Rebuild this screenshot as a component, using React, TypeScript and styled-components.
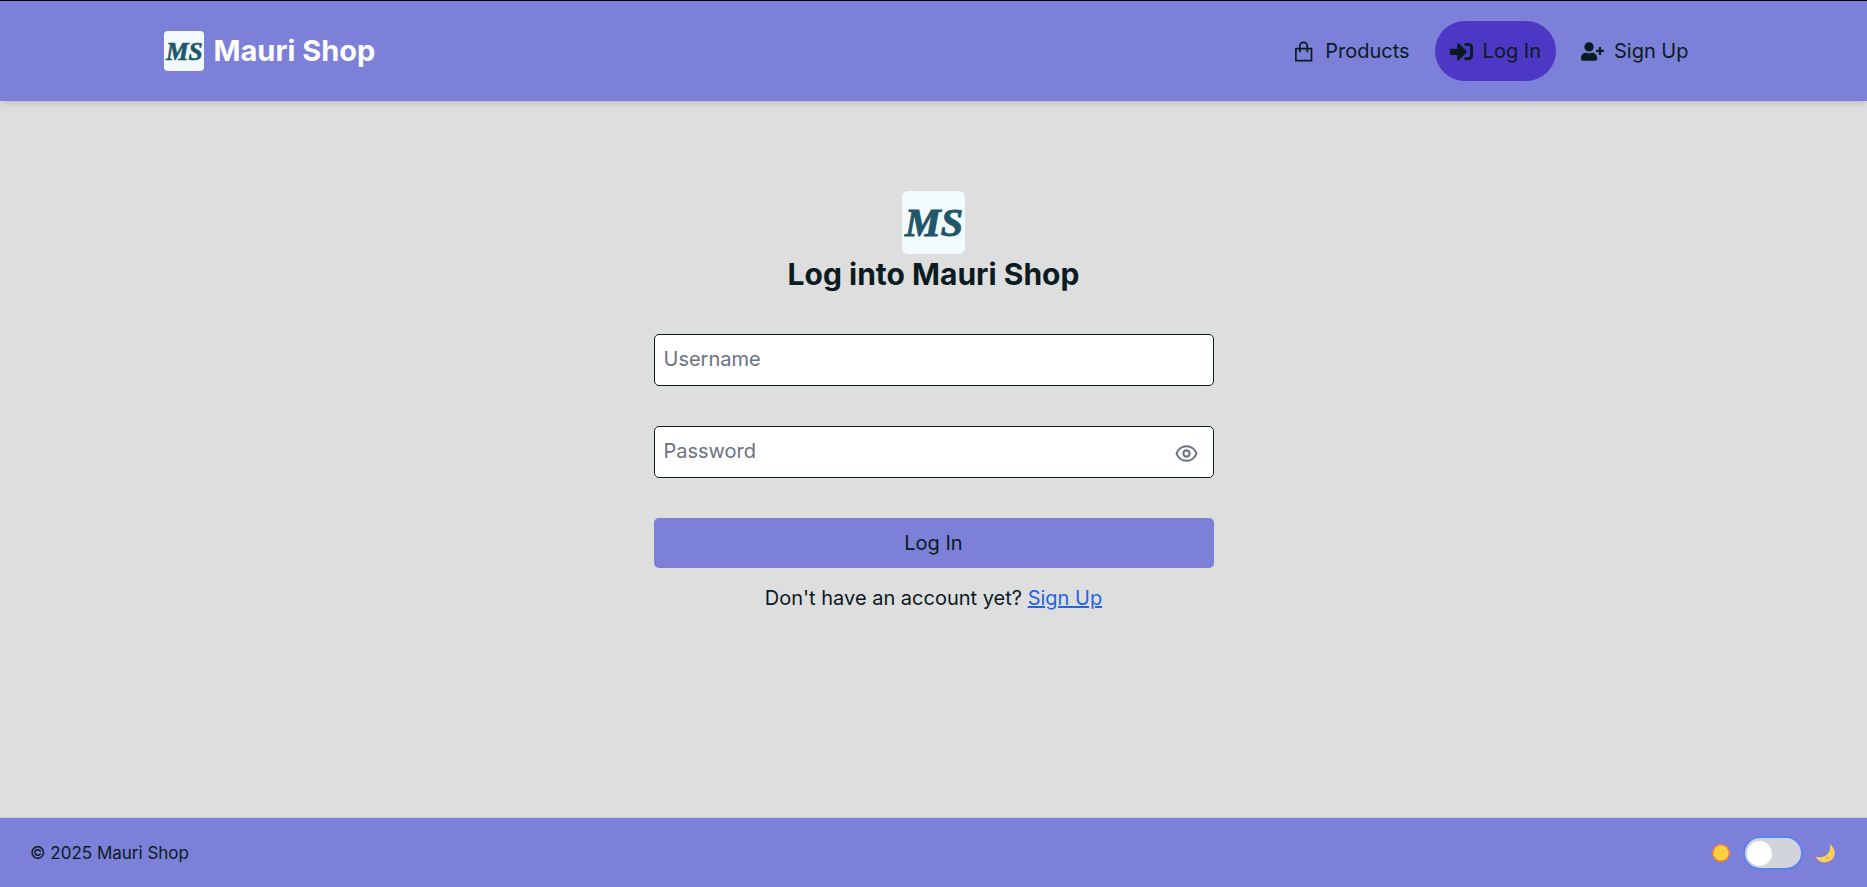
import React, { useState } from 'react';
import styled, { createGlobalStyle } from 'styled-components';
import { FaSignInAlt, FaUserPlus } from 'react-icons/fa';
import { HiOutlineEye } from 'react-icons/hi';

const ink = '#0a1b22';
const primary = '#7c80d9';
const accent = '#4d38c6';

const GlobalStyle = createGlobalStyle`
  *, *::before, *::after { box-sizing: border-box; }
  body {
    margin: 0;
    background: #dedede;
    color: ${ink};
    font-family: Inter, "Liberation Sans", sans-serif;
    font-size: 20px;
    line-height: 30px;
  }
`;

const Page = styled.div`
  display: flex;
  flex-direction: column;
  min-height: 100vh;
`;

const Header = styled.header`
  background: ${primary};
  border-top: 1px solid #000;
  box-shadow: 0 4px 6px -1px rgba(0, 0, 0, 0.1), 0 2px 4px -2px rgba(0, 0, 0, 0.1);
`;

const HeaderInner = styled.div`
  display: flex;
  align-items: center;
  justify-content: space-between;
  max-width: 1600px;
  margin: 0 auto;
  padding: 20px 30px;
`;

const Brand = styled.a`
  display: flex;
  align-items: center;
  gap: 10px;
  color: #fff;
  font-size: 29px;
  font-weight: 700;
  text-decoration: none;
`;

const Nav = styled.nav`
  display: flex;
  gap: 10px;
`;

const NavLink = styled.a<{ $active?: boolean }>`
  display: flex;
  align-items: center;
  gap: 10px;
  padding: 15px;
  border-radius: 30px;
  background: ${({ $active }) => ($active ? accent : 'transparent')};
  color: ${ink};
  text-decoration: none;
  svg { width: 23px; height: 23px; }
`;

const Main = styled.main`
  flex: 1;
  display: flex;
  justify-content: center;
  padding: 90px 20px 40px;
`;

const Form = styled.form`
  display: flex;
  flex-direction: column;
  align-items: center;
  gap: 40px;
  width: 100%;
  max-width: 560px;
`;

const FormHead = styled.div`
  display: flex;
  flex-direction: column;
  align-items: center;
`;

const Title = styled.h1`
  margin: 0;
  font-size: 30px;
  font-weight: 700;
  line-height: 40px;
`;

const Field = styled.div`
  display: flex;
  align-items: center;
  width: 100%;
  height: 52px;
  padding: 0 14px 0 9px;
  background: #fff;
  border: 1px solid ${ink};
  border-radius: 5px;
`;

const TextInput = styled.input`
  flex: 1;
  min-width: 0;
  padding: 0 0 2px;
  border: 0;
  outline: 0;
  background: transparent;
  color: ${ink};
  font: inherit;
  &::placeholder { color: #6b7280; opacity: 1; }
`;

const EyeButton = styled.button`
  display: flex;
  padding: 2px 0 0;
  border: 0;
  background: none;
  color: #6b7280;
  cursor: pointer;
  svg { width: 25px; height: 25px; }
`;

const Actions = styled.div`
  display: flex;
  flex-direction: column;
  gap: 15px;
  width: 100%;
  text-align: center;
`;

const Submit = styled.button`
  padding: 10px;
  border: 0;
  border-radius: 5px;
  background: ${primary};
  color: ${ink};
  font: inherit;
  cursor: pointer;
`;

const Prompt = styled.p`
  margin: 0;
  a { color: #2563eb; }
`;

const Footer = styled.footer`
  display: flex;
  align-items: center;
  justify-content: space-between;
  padding: 20px 32px 19px 30px;
  border-top: 1px solid #d0d0d0;
  background: ${primary};
  font-size: 17px;
`;

const ThemeSwitch = styled.label`
  display: flex;
  align-items: center;
  gap: 14px;
`;

const Switch = styled.input`
  appearance: none;
  width: 56px;
  height: 30px;
  margin: 0;
  padding: 3px 2px;
  border-radius: 15px;
  background: #d1d5db;
  box-shadow: 0 0 0 2px #5a82ee;
  cursor: pointer;
  &::before {
    content: '';
    display: block;
    width: 25px;
    height: 25px;
    border-radius: 50%;
    background: #fff;
  }
  &:checked::before { margin-left: auto; }
`;

const LogoText = styled.text`
  font: italic 700 40px "Liberation Serif", serif;
  fill: #1f566b;
  stroke: #1f566b;
  stroke-width: 1px;
`;

const Logo = ({ size }: { size: number }) => (
  <svg width={size} height={size} viewBox="0 0 63 63" role="img" aria-label="Mauri Shop logo">
    <rect width="63" height="63" rx="6" fill="#f2fafc" />
    <LogoText x="32" y="45" textAnchor="middle">MS</LogoText>
  </svg>
);

const Bag = () => (
  <svg viewBox="0 0 23 23" fill="none" stroke="currentColor" strokeWidth="1.7" aria-hidden="true">
    <path d="M3.900 8.700H19.500V20.600H3.900Z" />
    <path d="M7.900 12.200V6a3.700 3.700 0 0 1 7.400 0V12.200" />
  </svg>
);

const Sun = () => (
  <svg width="20" height="20" viewBox="-10 -10 20 20" aria-hidden="true">
    {[0, 30, 60].map((angle) => (
      <rect key={angle} x="-7" y="-7" width="14" height="14" fill="#fb7f35" transform={`rotate(${angle})`} />
    ))}
    <circle r="7.6" fill="#fed23e" />
  </svg>
);

const Moon = () => (
  <svg width="20" height="20" viewBox="0 0 20 20" aria-hidden="true">
    <path d="M14.6 1C21 5.500 21.300 13.500 15.500 17.500C10.300 21 3.500 19.300.4 13.400C4.500 15.200 9.500 14.400 12.500 11C15.200 8 15.600 4.500 14.600 1Z" fill="#fdd35b" />
    <circle cx="12.600" cy="14.600" r="2" fill="#fbb84e" />
    <circle cx="16.800" cy="9" r="1.300" fill="#fbb84e" />
    <circle cx="6.600" cy="16.500" r="1" fill="#fbb84e" />
  </svg>
);

export default function App() {
  const [visible, setVisible] = useState(false);
  return (
    <Page>
      <GlobalStyle />
      <Header>
        <HeaderInner>
          <Brand href="#">
            <Logo size={40} />
            Mauri Shop
          </Brand>
          <Nav>
            <NavLink href="#products"><Bag />Products</NavLink>
            <NavLink href="#login" $active><FaSignInAlt />Log In</NavLink>
            <NavLink href="#signup"><FaUserPlus />Sign Up</NavLink>
          </Nav>
        </HeaderInner>
      </Header>
      <Main>
        <Form onSubmit={(e) => e.preventDefault()}>
          <FormHead>
            <Logo size={63} />
            <Title>Log into Mauri Shop</Title>
          </FormHead>
          <Field>
            <TextInput type="text" placeholder="Username" aria-label="Username" />
          </Field>
          <Field>
            <TextInput type={visible ? 'text' : 'password'} placeholder="Password" aria-label="Password" />
            <EyeButton type="button" aria-label="Show password" onClick={() => setVisible(!visible)}>
              <HiOutlineEye />
            </EyeButton>
          </Field>
          <Actions>
            <Submit type="submit">Log In</Submit>
            <Prompt>Don't have an account yet? <a href="#signup">Sign Up</a></Prompt>
          </Actions>
        </Form>
      </Main>
      <Footer>
        <span>© 2025 Mauri Shop</span>
        <ThemeSwitch>
          <Sun />
          <Switch type="checkbox" role="switch" aria-label="Dark mode" />
          <Moon />
        </ThemeSwitch>
      </Footer>
    </Page>
  );
}
